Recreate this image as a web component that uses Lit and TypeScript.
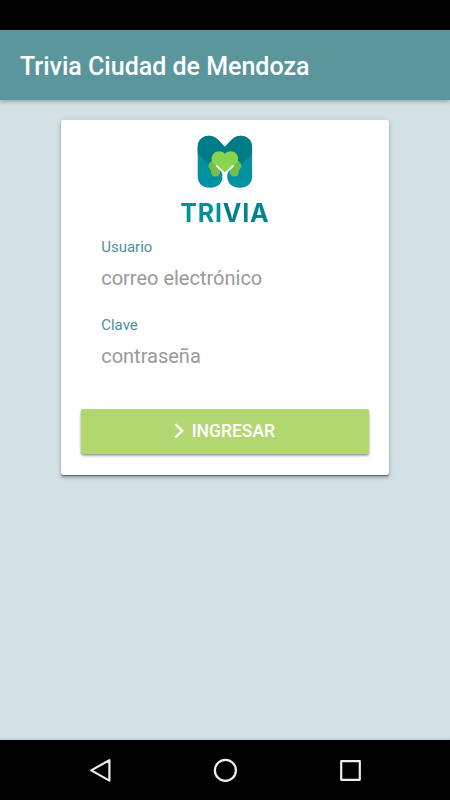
import { LitElement, html, css } from "lit";
import { customElement, property } from "lit/decorators.js";

@customElement("trivia-logo")
class TriviaLogo extends LitElement {
  static styles = css`
    :host { display: block; width: 100px; height: 66px; }
    svg { display: block; }
  `;
  render() {
    return html`<svg width="100" height="66" viewBox="0 0 100 66">
      <defs>
        <clipPath id="m"><path d="M22.7 22.5 C22.7 10.5 36 7.5 43 14.8 L49.8 22 L56.6 14.8 C63.6 7.5 77.1 10.5 77.1 22.5 V51.3 C77.1 58.5 72.5 62.7 64.5 62.7 C56.5 62.7 52.2 58 52.2 51.3 H47.6 C47.6 58 43.2 62.7 35.2 62.7 C27.4 62.7 22.7 58.5 22.7 51.3 Z"/></clipPath>
      </defs>
      <g clip-path="url(#m)">
        <path fill="#0092a0" d="M20 8h60v57H20z"/>
        <path fill="#007c87" d="M20 8h60v18L66 40H34L20 26z"/>
      </g>
      <g fill="#76bd4b">
        <circle cx="38.3" cy="40.8" r="4.8"/><circle cx="40.5" cy="47" r="4.6"/>
        <circle cx="61.5" cy="40.8" r="4.8"/><circle cx="59.3" cy="47" r="4.6"/>
      </g>
      <path fill="#85d64e" d="M49.9 28.7C53 25.4 58.2 25.4 61.1 28.5C64 31.6 63.8 36 61.1 38.8L49.9 49.5L38.7 38.8C36 36 35.8 31.6 38.7 28.5C41.6 25.4 46.8 25.4 49.9 28.7Z"/>
      <path fill="none" stroke="#fff" stroke-width="1.9" stroke-linecap="round" d="M41.8 41L49.9 48.6L58 41"/>
      <path fill="#fff" d="M46.2 46.6L49.9 48.2L53.6 46.6C52.5 48.5 52.2 50 52.2 53H47.6C47.6 50 47.3 48.5 46.2 46.6Z"/>
    </svg>`;
  }
}

@customElement("login-field")
class LoginField extends LitElement {
  @property() label = "";
  @property() hint = "";
  static styles = css`
    :host { display: block; height: 77.5px; }
    .label { display: block; font-size: 15px; line-height: 18px; color: #4b929a; }
    .input {
      display: block; width: 100%; height: 30px; margin: 7px 0 0; padding: 0; border: 0;
      outline: 0; background: transparent; font: 400 20px/30px Roboto, sans-serif; color: #333;
    }
    .input::placeholder { color: #999; opacity: 1; }
  `;
  render() {
    return html`<label class="label">${this.label}</label>
      <input class="input" placeholder=${this.hint} />`;
  }
}

@customElement("app-root")
class AppRoot extends LitElement {
  static styles = css`
    :host {
      display: flex; flex-direction: column; width: 450px; height: 800px;
      font-family: Roboto, sans-serif; background: #d2e1e4; overflow: hidden;
    }
    * { box-sizing: border-box; }
    .status { height: 30px; background: #000; }
    .header {
      height: 70px; padding: 2px 20px 0; display: flex; align-items: center;
      background: #5a969c; color: #fff; font-size: 25px; font-weight: 500;
      box-shadow: 0 1px 5px rgba(0,0,0,.34);
    }
    .title { white-space: nowrap; }
    .main { flex: 1; padding: 20px 61.5px 0 61.2px; box-shadow: inset 0 -3px 3px -2px rgba(0,0,0,.12); }
    .card {
      height: 355px; padding: 10px 20px 0; background: #fff; border-radius: 2.5px;
      display: flex; flex-direction: column;
      box-shadow: 0 2.5px 2.5px rgba(0,0,0,.2), 0 1px 6px rgba(0,0,0,.13), 0 1px 1px rgba(0,0,0,.35);
    }
    .brand { display: flex; flex-direction: column; align-items: center; height: 108px; }
    .mark { height: 66px; margin-top: -5px; }
    .word {
      margin-top: 7px; font: 700 25px/30px Inter, sans-serif; letter-spacing: .75px;
      white-space: nowrap;
      background: linear-gradient(95deg, #00919e 0 48%, #007985 49% 57%, #00848f 58%);
      background-clip: text; -webkit-background-clip: text; color: transparent;
    }
    .form { padding: 0 20px; }
    .button {
      display: flex; align-items: center; justify-content: center; gap: 8px;
      height: 45px; margin-top: 16px; padding: 0 1px 2px 0; border: 0; border-radius: 2.5px;
      background: #b3d770; color: #fff; font: 500 17.5px Roboto, sans-serif;
      box-shadow: 0 2px 3px rgba(0,0,0,.25), 0 1px 2px rgba(0,0,0,.25);
    }
    .nav {
      height: 60px; padding: 0 85px; background: #000;
      display: flex; justify-content: space-between; align-items: center;
    }
    .nav svg { fill: none; stroke: #eee; stroke-width: 2.2; stroke-linejoin: round; }
  `;
  render() {
    return html`
      <div class="status"></div>
      <header class="header"><span class="title">Trivia Ciudad de Mendoza</span></header>
      <main class="main">
        <section class="card">
          <div class="brand">
            <div class="mark"><trivia-logo></trivia-logo></div>
            <span class="word">TRIVIA</span>
          </div>
          <div class="form">
            <login-field label="Usuario" hint="correo electrónico"></login-field>
            <login-field label="Clave" hint="contraseña"></login-field>
          </div>
          <button class="button">
            <svg width="10" height="16" viewBox="0 0 10 16"><path d="M1.3 1.2L8.2 7.8L1.3 14.4" fill="none" stroke="#fff" stroke-width="2.3"/></svg>
            <span>INGRESAR</span>
          </button>
        </section>
      </main>
      <nav class="nav">
        <svg width="30" height="30" viewBox="0 0 30 30"><path d="M6.2 15.4L24.4 5.2V25.6Z"/></svg>
        <svg width="30" height="30" viewBox="0 0 30 30"><circle cx="15.4" cy="15.4" r="10.5"/></svg>
        <svg width="30" height="30" viewBox="0 0 30 30"><path d="M6.2 6.2H24.8V24.8H6.2Z"/></svg>
      </nav>`;
  }
}
